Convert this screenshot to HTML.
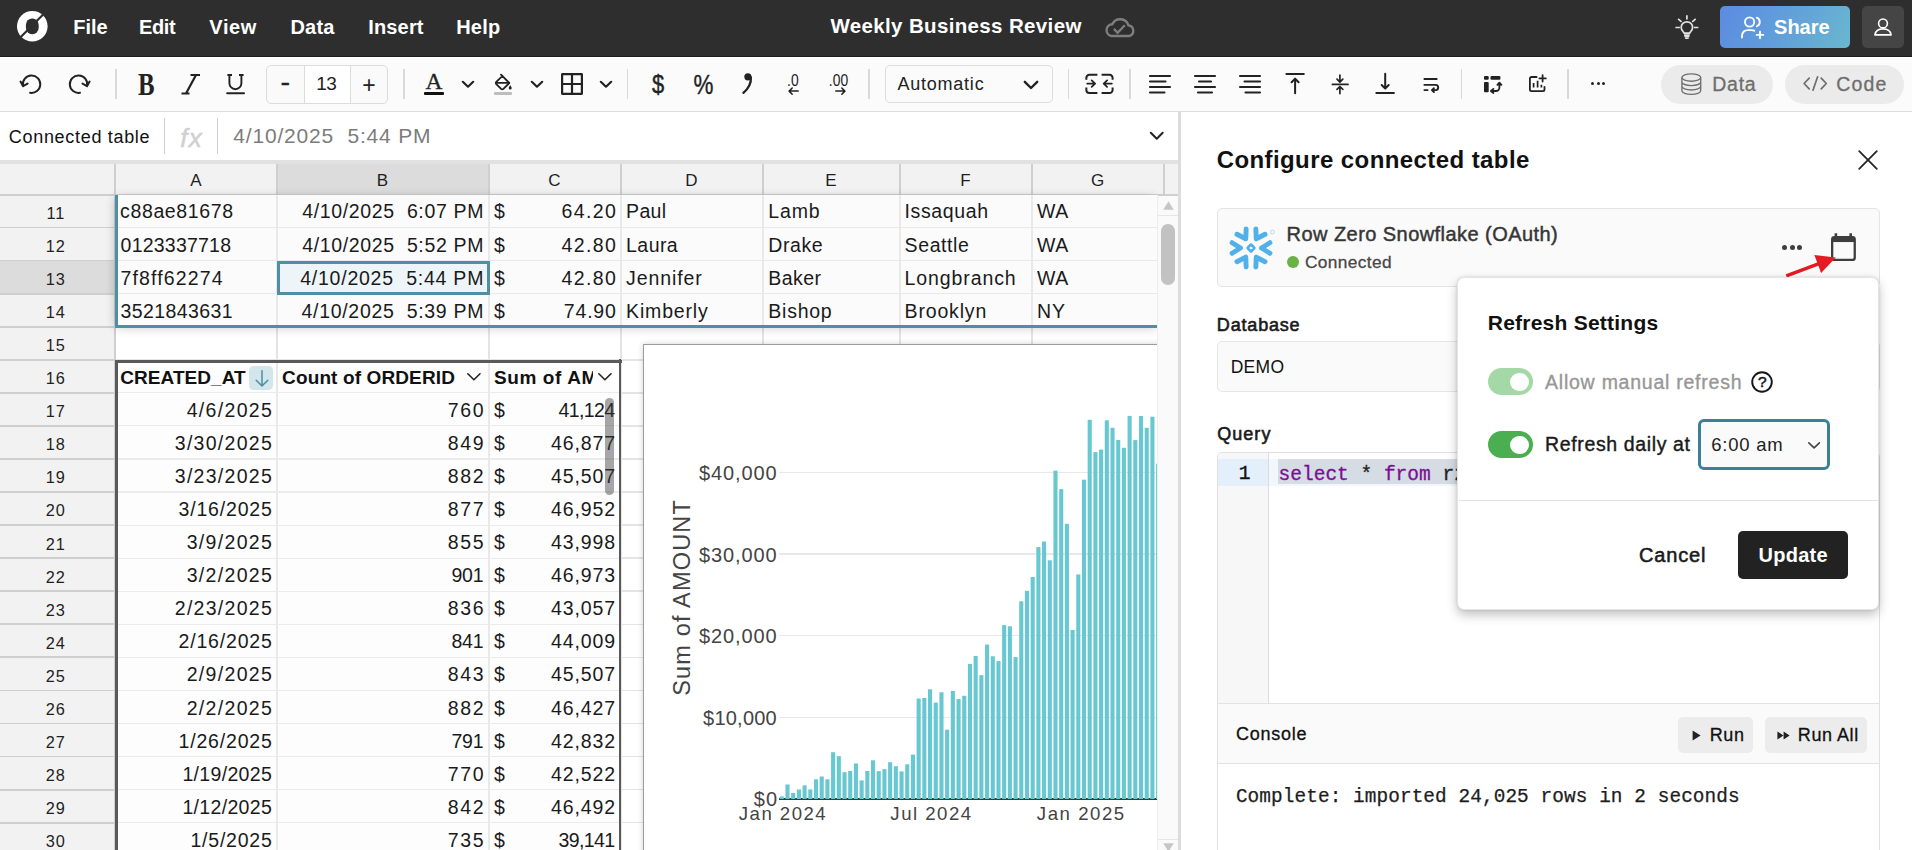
<!DOCTYPE html>
<html lang="en"><head><meta charset="utf-8"><title>Weekly Business Review</title>
<style>
html,body{margin:0;padding:0;}
body{width:1912px;height:850px;overflow:hidden;position:relative;background:#fff;font-family:"Liberation Sans",sans-serif;color:#1a1a1a;}
div,span,svg{position:absolute;box-sizing:border-box;}
span{white-space:pre;}
.m{font-family:"Liberation Mono",monospace;}
svg{overflow:visible;}
.ic{fill:none;stroke:#222;stroke-width:2;stroke-linecap:round;stroke-linejoin:round;}
</style></head><body>
<div style="left:0px;top:0px;width:1912px;height:57px;background:#2e2e2e;border-bottom:1px solid #1d1d1d;"></div>
<svg style="left:16.8px;top:10.7px;width:30.6px;height:30.6px" viewBox="0 0 30.6 30.6"><circle cx="15.3" cy="15.3" r="15.3" fill="#fff"/><rect x="8.9" y="7.4" width="12.8" height="15.8" rx="6.2" ry="6.6" fill="#2e2e2e"/><path d="M27.2 2.6L3.0 26.8" stroke="#2e2e2e" stroke-width="2.1"/></svg>
<span id="t1" style="top:17.00px;font-size:20px;line-height:20px;font-weight:700;color:#fff;left:73.28px;">File</span>
<span id="t2" style="top:17.00px;font-size:20px;line-height:20px;font-weight:700;color:#fff;letter-spacing:-0.380px;left:138.98px;">Edit</span>
<span id="t3" style="top:17.00px;font-size:20px;line-height:20px;font-weight:700;color:#fff;letter-spacing:0.640px;left:209.28px;">View</span>
<span id="t4" style="top:17.00px;font-size:20px;line-height:20px;font-weight:700;color:#fff;letter-spacing:0.194px;left:290.48px;">Data</span>
<span id="t5" style="top:17.00px;font-size:20px;line-height:20px;font-weight:700;color:#fff;letter-spacing:0.174px;left:368.18px;">Insert</span>
<span id="t6" style="top:17.00px;font-size:20px;line-height:20px;font-weight:700;color:#fff;letter-spacing:0.199px;left:456.18px;">Help</span>
<span id="t7" style="top:16.00px;font-size:20.5px;line-height:20.5px;font-weight:700;color:#fff;letter-spacing:0.353px;left:830.46px;">Weekly Business Review</span>
<svg style="left:1104.8px;top:16.6px;width:31px;height:21px" viewBox="0 0 31 21"><path d="M6.4 19A5.9 5.9 0 0 1 7.3 7.3A8.6 8.6 0 0 1 23.4 8.4A5.4 5.4 0 0 1 24.2 19Z" fill="none" stroke="#7e7e7e" stroke-width="2.4" stroke-linejoin="round"/><path d="M8.9 11.9L12.6 15.8L19.8 8.2" fill="none" stroke="#7e7e7e" stroke-width="2.3" stroke-linecap="butt" stroke-linejoin="miter"/></svg>
<svg style="left:1675px;top:14px;width:24px;height:26px" viewBox="0 0 24 26"><g fill="none" stroke="#e2e2e2" stroke-width="1.7" stroke-linecap="butt" stroke-linejoin="round"><path d="M11.9 1.2V5.6M3.1 4.9L6.6 7.8M20.7 4.9L17.2 7.8M0.4 13.5H4.9M18.9 13.5H23.4"/><path d="M9 19.2C8.7 17.4 6.2 16.6 6.2 13.5A5.7 5.7 0 0 1 17.6 13.5C17.6 16.6 15.1 17.4 14.8 19.2Z"/><path d="M9 20.9H14.8M9.4 22.6H14.4M10.1 24.2H13.7" stroke-width="1.5"/></g></svg>
<div style="left:1720px;top:6px;width:130px;height:42px;border-radius:5px;background:linear-gradient(115deg,#5b8be2 0%,#62a2d9 55%,#69b7cf 100%);"></div>
<svg style="left:1741px;top:16px;width:25px;height:24px" viewBox="0 0 25 24"><g fill="none" stroke="#fff" stroke-width="1.9" stroke-linecap="round" stroke-linejoin="round"><circle cx="8.6" cy="6" r="4.6"/><path d="M1 21.5v-1.8a5.6 5.6 0 0 1 5.6-5.6h4.2a5.6 5.6 0 0 1 2.4.55"/><path d="M15.8 1.7a4.6 4.6 0 0 1 0 8.6"/><path d="M19 15.6v6.6M15.7 18.9h6.6"/></g></svg>
<span id="t8" style="top:17.00px;font-size:20px;line-height:20px;font-weight:700;color:#fff;letter-spacing:-0.038px;left:1774.08px;">Share</span>
<div style="left:1862px;top:6px;width:42px;height:42px;border-radius:5px;background:#454545;"></div>
<svg style="left:1874px;top:18px;width:18px;height:18px" viewBox="0 0 18 18"><g fill="none" stroke="#fff" stroke-width="1.6" stroke-linejoin="round"><circle cx="9" cy="5.4" r="4.4"/><path d="M0.9 16.9c0.6-3.6 3.4-6 8.1-6s7.5 2.4 8.1 6z"/></g></svg>
<div style="left:0px;top:57px;width:1912px;height:55px;background:#fbfbfb;border-top:1px solid #fff;border-bottom:1px solid #dddddd;"></div>
<div style="left:115.25px;top:69.3px;width:1.5px;height:29.8px;background:#d9d9d9;"></div>
<div style="left:403.25px;top:69.3px;width:1.5px;height:29.8px;background:#d9d9d9;"></div>
<div style="left:626.95px;top:69.3px;width:1.5px;height:29.8px;background:#d9d9d9;"></div>
<div style="left:868.25px;top:69.3px;width:1.5px;height:29.8px;background:#d9d9d9;"></div>
<div style="left:1067.65px;top:69.3px;width:1.5px;height:29.8px;background:#d9d9d9;"></div>
<div style="left:1129.25px;top:69.3px;width:1.5px;height:29.8px;background:#d9d9d9;"></div>
<div style="left:1460.75px;top:69.3px;width:1.5px;height:29.8px;background:#d9d9d9;"></div>
<div style="left:1567.25px;top:69.3px;width:1.5px;height:29.8px;background:#d9d9d9;"></div>
<svg class="ic" style="left:20px;top:73px;width:22px;height:22px" viewBox="0 0 22 22"><path d="M3.0 12.6A8.7 8.7 0 1 1 10.1 19.8"/><path d="M0.5 8.6L3.1 13.2L7.6 10.6"/></svg>
<svg class="ic" style="left:68px;top:73px;width:22px;height:22px" viewBox="0 0 22 22"><path d="M19.1 12.6A8.7 8.7 0 1 0 12.0 19.8"/><path d="M21.6 8.6L19.0 13.2L14.5 10.6"/></svg>
<span id="t9" style="top:69.00px;font-size:31px;line-height:31px;font-weight:700;color:#222;left:136.16px;font-family:'Liberation Serif',serif;transform:scaleX(0.8);">B</span>
<svg class="ic" style="left:180px;top:74px;width:22px;height:21px" viewBox="0 0 22 21"><path d="M10.5 1h9.5M1.5 19.5h8M16 1L6 19.5" stroke-width="2.2" stroke-linecap="butt"/></svg>
<svg class="ic" style="left:225px;top:74px;width:21px;height:21px" viewBox="0 0 21 21"><path d="M4.4 1v8.2a6 6 0 0 0 12 0V1M2.4 1h4.6M14 1h4.6" stroke-width="1.9" stroke-linecap="butt"/><path d="M2.2 19.2h16.8" stroke-width="2"/></svg>
<div style="left:266px;top:65px;width:122px;height:39px;border:1.5px solid #dcdcdc;border-radius:5px;background:#fafafa;"></div>
<div style="left:304px;top:66px;width:47px;height:37px;background:#fff;border-left:1.5px solid #dcdcdc;border-right:1.5px solid #dcdcdc;"></div>
<span id="t10" style="top:70.00px;font-size:25px;line-height:25px;color:#222;left:281.04px;transform:scaleX(1.15);-webkit-text-stroke:0.3px #222;">-</span>
<span id="t11" style="top:74.00px;font-size:19px;line-height:19px;color:#222;letter-spacing:-0.573px;left:316.32px;">13</span>
<span id="t12" style="top:74.00px;font-size:23px;line-height:23px;color:#222;left:362.28px;">+</span>
<span id="t13" style="top:70.00px;font-size:23.5px;line-height:23.5px;color:#222;left:425.41px;font-family:'Liberation Serif',serif;-webkit-text-stroke:0.3px #222;">A</span>
<div style="left:424px;top:92px;width:20px;height:3px;background:#111;border-radius:1px;"></div>
<svg style="left:462px;top:81px;width:12px;height:6.5px" viewBox="0 0 12 6.5"><path d="M0.8 0.8L6.0 5.7L11.2 0.8" fill="none" stroke="#222" stroke-width="2.2" stroke-linecap="round" stroke-linejoin="round"/></svg>
<svg style="left:531px;top:81px;width:12px;height:6.5px" viewBox="0 0 12 6.5"><path d="M0.8 0.8L6.0 5.7L11.2 0.8" fill="none" stroke="#222" stroke-width="2.2" stroke-linecap="round" stroke-linejoin="round"/></svg>
<svg style="left:600px;top:81px;width:12px;height:6.5px" viewBox="0 0 12 6.5"><path d="M0.8 0.8L6.0 5.7L11.2 0.8" fill="none" stroke="#222" stroke-width="2.2" stroke-linecap="round" stroke-linejoin="round"/></svg>
<svg class="ic" style="left:494px;top:73.9px;width:19px;height:18px" viewBox="0 0 19 18"><path d="M7 0.7L15.3 9L9.4 14.9a1.6 1.6 0 0 1-2.3 0L2.3 10.1a1.6 1.6 0 0 1 0-2.3L8.5 1.8" stroke-width="1.8"/><path d="M2.2 8.9H15" stroke-width="1.7"/><path d="M16.2 11.2c0 0 1.5 1.9 1.5 2.9a1.5 1.5 0 0 1-3 0c0-1 1.5-2.9 1.5-2.9z" fill="#222" stroke="none"/></svg>
<div style="left:494px;top:92px;width:18px;height:2.6px;background:#bdbdbd;border-radius:1px;"></div>
<svg class="ic" style="left:561px;top:72.8px;width:22px;height:22px" viewBox="0 0 22 22"><rect x="1.1" y="1.1" width="19.8" height="19.8" rx="0.3" stroke-width="2.2" stroke-linejoin="miter"/><path d="M11 1v20M1 11h20" stroke-width="2.2"/></svg>
<span id="t14" style="top:72.00px;font-size:25.5px;line-height:25.5px;color:#222;left:650.61px;transform:scaleX(0.86);-webkit-text-stroke:0.45px #222;">$</span>
<span id="t15" style="top:71.00px;font-size:28px;line-height:28px;color:#222;left:690.65px;transform:scaleX(0.8);-webkit-text-stroke:0.4px #222;">%</span>
<svg style="left:742px;top:73.3px;width:11px;height:21px" viewBox="0 0 11 21"><circle cx="5.9" cy="3.8" r="3.6" fill="#222"/><path d="M8.9 4.4C9.3 10.6 6.4 15.6 1.4 19.8" fill="none" stroke="#222" stroke-width="2.3" stroke-linecap="round"/></svg>
<span id="t16" style="top:72.00px;font-size:16.5px;line-height:16.5px;color:#222;left:786.22px;transform:scaleX(0.84);">.0</span>
<svg class="ic" style="left:787.5px;top:87px;width:11px;height:8px" viewBox="0 0 11 8"><path d="M10.2 4.1H1.2M4.2 1L1.1 4.1l3.1 3.1" stroke-width="1.5"/></svg>
<span id="t17" style="top:72.00px;font-size:16.5px;line-height:16.5px;color:#222;left:826.73px;transform:scaleX(0.84);">.00</span>
<svg class="ic" style="left:834.5px;top:87px;width:11px;height:8px" viewBox="0 0 11 8"><path d="M0.8 4.1H9.8M6.8 1l3.1 3.1-3.1 3.1" stroke-width="1.5"/></svg>
<div style="left:885px;top:65px;width:168px;height:38px;border:1.5px solid #dcdcdc;border-radius:5px;background:#fbfbfb;"></div>
<span id="t18" style="top:75.00px;font-size:18px;line-height:18px;color:#222;letter-spacing:0.756px;left:897.55px;">Automatic</span>
<svg style="left:1024px;top:80.5px;width:14px;height:7.8px" viewBox="0 0 14 7.8"><path d="M0.8 0.8L7.0 7.0L13.2 0.8" fill="none" stroke="#222" stroke-width="2.4" stroke-linecap="round" stroke-linejoin="round"/></svg>
<svg class="ic" style="left:1084.5px;top:74px;width:29px;height:20px" viewBox="0 0 29 20"><path d="M1.35 5.7V3.85A3 3 0 0 1 4.35 0.85H12.4M16.6 0.85H24.6A3 3 0 0 1 27.6 3.85V5.7M1.35 13.5V16A3 3 0 0 0 4.35 19H12.4M16.6 19H24.6A3 3 0 0 0 27.6 16V13.5" stroke-width="2" stroke-linecap="butt"/><path d="M2.2 9.6H9.8M6.7 6.4L10.1 9.6L6.7 12.8M26.8 9.6H19M22.1 6.4L18.7 9.6L22.1 12.8" stroke-width="1.8"/></svg>
<svg class="ic" style="left:1149px;top:73.65px;width:22px;height:20px" viewBox="0 0 22 20"><path d="M1 2H21M1 7.5H16.5M1 13H21M1 18.5H15.5" stroke-width="2.1" stroke-linecap="round"/></svg>
<svg class="ic" style="left:1194px;top:73.65px;width:22px;height:20px" viewBox="0 0 22 20"><path d="M1 2H21M5 7.5H17M1 13H21M4 18.5H18" stroke-width="2.1" stroke-linecap="round"/></svg>
<svg class="ic" style="left:1239px;top:73.65px;width:22px;height:20px" viewBox="0 0 22 20"><path d="M1 2H21M5.5 7.5H21M1 13H21M6.5 18.5H21" stroke-width="2.1" stroke-linecap="round"/></svg>
<svg class="ic" style="left:1285px;top:73.3px;width:20px;height:21px" viewBox="0 0 20 21"><path d="M1.4 1h17.4M10.1 20.2V6.2M6.6 9.2L10.1 5.6l3.5 3.6" stroke-width="2"/></svg>
<svg class="ic" style="left:1331px;top:74px;width:18px;height:20px" viewBox="0 0 18 20"><path d="M1.4 10.4h15.6M8.9 1v6.6M6 5.2l2.9 2.9 2.9-2.9M8.9 19.6V13M6 15.4l2.9-2.9 2.9 2.9" stroke-width="1.7"/></svg>
<svg class="ic" style="left:1375px;top:73px;width:20px;height:21px" viewBox="0 0 20 21"><path d="M1.3 19.9h17.6M10.2 0.8V15.4M6.7 12L10.2 15.6l3.5-3.6" stroke-width="2"/></svg>
<svg class="ic" style="left:1421.5px;top:76.5px;width:17px;height:17px" viewBox="0 0 17 17"><path d="M2.4 2H14.7M2.4 7.9H13.6a2.6 2.6 0 0 1 0 5.2H10.6M11.9 11.2L9.9 13.1L11.9 15M2.4 13.1H5.6" stroke-width="1.9"/></svg>
<svg style="left:1483.8px;top:75.9px;width:18px;height:17px" viewBox="0 0 18 17"><g fill="#222"><rect x="0" y="0" width="4.7" height="3.8" rx="1"/><rect x="6.5" y="0" width="9.9" height="3.8" rx="1"/><rect x="0" y="6.1" width="4.7" height="10.1" rx="1"/></g><path d="M8.2 15H12a3.4 3.4 0 0 0 3.4-3.4V7.4M9.4 12.9L6.9 15L9.4 17M13.4 8.9L15.4 6.6L17.4 8.9" fill="none" stroke="#222" stroke-width="1.8" stroke-linecap="round" stroke-linejoin="round"/></svg>
<svg class="ic" style="left:1528.9px;top:75px;width:18px;height:18px" viewBox="0 0 18 18"><path d="M7.6 2H2.5A1.6 1.6 0 0 0 0.9 3.6V14.5A1.6 1.6 0 0 0 2.5 16.1H13.9A1.6 1.6 0 0 0 15.5 14.5V11.8M13.6 0.2V6.6M10.4 3.4H16.8" stroke-width="1.8"/><path d="M4.6 12.6V7.9M8.6 12.6V5.8M12.4 12.6V9.8" stroke-width="1.7" stroke-linecap="butt"/></svg>
<div style="left:1590.85px;top:82.35px;width:3.1px;height:3.1px;background:#222;border-radius:50%;"></div>
<div style="left:1596.6px;top:82.35px;width:3.1px;height:3.1px;background:#222;border-radius:50%;"></div>
<div style="left:1602.35px;top:82.35px;width:3.1px;height:3.1px;background:#222;border-radius:50%;"></div>
<div style="left:1661px;top:65px;width:112px;height:39px;background:#ebebeb;border-radius:20px;"></div>
<svg style="left:1680.6px;top:72.6px;width:21px;height:23px" viewBox="0 0 21 23"><g fill="none" stroke="#6f6f6f" stroke-width="1.35"><ellipse cx="10.3" cy="4.5" rx="9.4" ry="3.7"/><path d="M0.9 4.5v13.2c0 2 4.2 3.7 9.4 3.7s9.4-1.7 9.4-3.7V4.5M0.9 8.9c0 2 4.2 3.7 9.4 3.7s9.4-1.7 9.4-3.7M0.9 13.3c0 2 4.2 3.7 9.4 3.7s9.4-1.7 9.4-3.7"/></g></svg>
<span id="t19" style="top:75.00px;font-size:19.5px;line-height:19.5px;color:#6e6e6e;letter-spacing:0.734px;left:1712.30px;-webkit-text-stroke:0.3px #6e6e6e;">Data</span>
<div style="left:1785px;top:65px;width:118.8px;height:39px;background:#ebebeb;border-radius:20px;"></div>
<svg style="left:1803px;top:76px;width:25px;height:15px" viewBox="0 0 25 15"><path d="M6.2 2.2L1.1 7.5l5.1 5.3M18.2 2.2l5.1 5.3-5.1 5.3M14.6 0.8L10 14.2" fill="none" stroke="#6e6e6e" stroke-width="1.7" stroke-linecap="round" stroke-linejoin="round"/></svg>
<span id="t20" style="top:75.00px;font-size:19.5px;line-height:19.5px;color:#6e6e6e;letter-spacing:1.126px;left:1836.30px;-webkit-text-stroke:0.3px #6e6e6e;">Code</span>
<div style="left:0px;top:112px;width:1179px;height:48px;background:#fff;"></div>
<span id="t21" style="top:128.00px;font-size:18px;line-height:18px;color:#111;letter-spacing:0.685px;left:8.85px;">Connected table</span>
<div style="left:164.4px;top:118px;width:1px;height:36px;background:#cfcfcf;"></div>
<div style="left:217px;top:118px;width:1px;height:36px;background:#cfcfcf;"></div>
<span id="t22" style="top:125.00px;font-size:26px;line-height:26px;color:#d0d0d0;font-style:italic;letter-spacing:1.138px;left:180.36px;-webkit-text-stroke:0.5px #d0d0d0;">fx</span>
<span id="t23" style="top:125.00px;font-size:21px;line-height:21px;color:#7c7c7c;letter-spacing:0.824px;left:233.24px;">4/10/2025 &nbsp;5:44 PM</span>
<svg style="left:1150px;top:132px;width:13.5px;height:7.5px" viewBox="0 0 13.5 7.5"><path d="M0.8 0.8L6.75 6.7L12.7 0.8" fill="none" stroke="#222" stroke-width="2" stroke-linecap="round" stroke-linejoin="round"/></svg>
<div style="left:0px;top:160px;width:1179px;height:3.5px;background:#e1e1e1;"></div>
<div style="left:0px;top:163.5px;width:1157.5px;height:687px;background:#fff;"></div>
<div style="left:276.25px;top:195px;width:1.5px;height:655px;background:#e4e4e4;"></div>
<div style="left:488.25px;top:195px;width:1.5px;height:655px;background:#e4e4e4;"></div>
<div style="left:620.25px;top:195px;width:1.5px;height:655px;background:#e4e4e4;"></div>
<div style="left:762.25px;top:195px;width:1.5px;height:655px;background:#e4e4e4;"></div>
<div style="left:899.25px;top:195px;width:1.5px;height:655px;background:#e4e4e4;"></div>
<div style="left:1031.25px;top:195px;width:1.5px;height:655px;background:#e4e4e4;"></div>
<div style="left:115px;top:193.65px;width:1043px;height:1.5px;background:#e4e4e4;"></div>
<div style="left:115px;top:226.72px;width:1043px;height:1.5px;background:#e4e4e4;"></div>
<div style="left:115px;top:259.79px;width:1043px;height:1.5px;background:#e4e4e4;"></div>
<div style="left:115px;top:292.86px;width:1043px;height:1.5px;background:#e4e4e4;"></div>
<div style="left:115px;top:325.93px;width:1043px;height:1.5px;background:#e4e4e4;"></div>
<div style="left:115px;top:359.0px;width:1043px;height:1.5px;background:#e4e4e4;"></div>
<div style="left:115px;top:392.07000000000005px;width:1043px;height:1.5px;background:#e4e4e4;"></div>
<div style="left:115px;top:425.14px;width:1043px;height:1.5px;background:#e4e4e4;"></div>
<div style="left:115px;top:458.21000000000004px;width:1043px;height:1.5px;background:#e4e4e4;"></div>
<div style="left:115px;top:491.28px;width:1043px;height:1.5px;background:#e4e4e4;"></div>
<div style="left:115px;top:524.35px;width:1043px;height:1.5px;background:#e4e4e4;"></div>
<div style="left:115px;top:557.42px;width:1043px;height:1.5px;background:#e4e4e4;"></div>
<div style="left:115px;top:590.49px;width:1043px;height:1.5px;background:#e4e4e4;"></div>
<div style="left:115px;top:623.5600000000001px;width:1043px;height:1.5px;background:#e4e4e4;"></div>
<div style="left:115px;top:656.63px;width:1043px;height:1.5px;background:#e4e4e4;"></div>
<div style="left:115px;top:689.7px;width:1043px;height:1.5px;background:#e4e4e4;"></div>
<div style="left:115px;top:722.77px;width:1043px;height:1.5px;background:#e4e4e4;"></div>
<div style="left:115px;top:755.84px;width:1043px;height:1.5px;background:#e4e4e4;"></div>
<div style="left:115px;top:788.91px;width:1043px;height:1.5px;background:#e4e4e4;"></div>
<div style="left:115px;top:821.98px;width:1043px;height:1.5px;background:#e4e4e4;"></div>
<div style="left:115px;top:855.05px;width:1043px;height:1.5px;background:#e4e4e4;"></div>
<div style="left:0px;top:163.5px;width:1178px;height:31.5px;background:#f2f2f2;"></div>
<div style="left:277px;top:163.5px;width:212px;height:31.5px;background:#dcdcdc;"></div>
<div style="left:0px;top:194px;width:1178px;height:1.8px;background:#cfcfcf;"></div>
<div style="left:114.25px;top:163.5px;width:1.5px;height:31.5px;background:#cfcfcf;"></div>
<div style="left:276.25px;top:163.5px;width:1.5px;height:31.5px;background:#cfcfcf;"></div>
<div style="left:488.25px;top:163.5px;width:1.5px;height:31.5px;background:#cfcfcf;"></div>
<div style="left:620.25px;top:163.5px;width:1.5px;height:31.5px;background:#cfcfcf;"></div>
<div style="left:762.25px;top:163.5px;width:1.5px;height:31.5px;background:#cfcfcf;"></div>
<div style="left:899.25px;top:163.5px;width:1.5px;height:31.5px;background:#cfcfcf;"></div>
<div style="left:1031.25px;top:163.5px;width:1.5px;height:31.5px;background:#cfcfcf;"></div>
<div style="left:1163.25px;top:163.5px;width:1.5px;height:31.5px;background:#cfcfcf;"></div>
<span id="t24" style="top:172.00px;font-size:17px;line-height:17px;color:#1f1f1f;left:190.33px;">A</span>
<span id="t25" style="top:172.00px;font-size:17px;line-height:17px;color:#1f1f1f;left:376.83px;">B</span>
<span id="t26" style="top:172.00px;font-size:17px;line-height:17px;color:#1f1f1f;left:548.36px;">C</span>
<span id="t27" style="top:172.00px;font-size:17px;line-height:17px;color:#1f1f1f;left:685.36px;">D</span>
<span id="t28" style="top:172.00px;font-size:17px;line-height:17px;color:#1f1f1f;left:825.33px;">E</span>
<span id="t29" style="top:172.00px;font-size:17px;line-height:17px;color:#1f1f1f;left:960.30px;">F</span>
<span id="t30" style="top:172.00px;font-size:17px;line-height:17px;color:#1f1f1f;left:1090.88px;">G</span>
<div style="left:0px;top:195.5px;width:115px;height:655px;background:#f2f2f2;"></div>
<div style="left:0px;top:260.54px;width:115px;height:33.07px;background:#dcdcdc;"></div>
<div style="left:0px;top:193.5px;width:115px;height:1.8px;background:#cfcfcf;"></div>
<div style="left:0px;top:226.57px;width:115px;height:1.8px;background:#cfcfcf;"></div>
<div style="left:0px;top:259.64000000000004px;width:115px;height:1.8px;background:#cfcfcf;"></div>
<div style="left:0px;top:292.71000000000004px;width:115px;height:1.8px;background:#cfcfcf;"></div>
<div style="left:0px;top:325.78000000000003px;width:115px;height:1.8px;background:#cfcfcf;"></div>
<div style="left:0px;top:358.85px;width:115px;height:1.8px;background:#cfcfcf;"></div>
<div style="left:0px;top:391.9200000000001px;width:115px;height:1.8px;background:#cfcfcf;"></div>
<div style="left:0px;top:424.99px;width:115px;height:1.8px;background:#cfcfcf;"></div>
<div style="left:0px;top:458.06000000000006px;width:115px;height:1.8px;background:#cfcfcf;"></div>
<div style="left:0px;top:491.13px;width:115px;height:1.8px;background:#cfcfcf;"></div>
<div style="left:0px;top:524.2px;width:115px;height:1.8px;background:#cfcfcf;"></div>
<div style="left:0px;top:557.27px;width:115px;height:1.8px;background:#cfcfcf;"></div>
<div style="left:0px;top:590.34px;width:115px;height:1.8px;background:#cfcfcf;"></div>
<div style="left:0px;top:623.4100000000001px;width:115px;height:1.8px;background:#cfcfcf;"></div>
<div style="left:0px;top:656.48px;width:115px;height:1.8px;background:#cfcfcf;"></div>
<div style="left:0px;top:689.5500000000001px;width:115px;height:1.8px;background:#cfcfcf;"></div>
<div style="left:0px;top:722.62px;width:115px;height:1.8px;background:#cfcfcf;"></div>
<div style="left:0px;top:755.69px;width:115px;height:1.8px;background:#cfcfcf;"></div>
<div style="left:0px;top:788.76px;width:115px;height:1.8px;background:#cfcfcf;"></div>
<div style="left:0px;top:821.83px;width:115px;height:1.8px;background:#cfcfcf;"></div>
<div style="left:0px;top:854.9px;width:115px;height:1.8px;background:#cfcfcf;"></div>
<div style="left:114.2px;top:195.5px;width:1.6px;height:655px;background:#cfcfcf;"></div>
<span id="t31" style="top:205.00px;font-size:16.3px;line-height:16.3px;color:#1f1f1f;letter-spacing:0.900px;left:46.40px;">11</span>
<span id="t32" style="top:238.00px;font-size:16.3px;line-height:16.3px;color:#1f1f1f;letter-spacing:0.900px;left:45.79px;">12</span>
<span id="t33" style="top:271.00px;font-size:16.3px;line-height:16.3px;color:#1f1f1f;letter-spacing:0.900px;left:45.79px;">13</span>
<span id="t34" style="top:304.00px;font-size:16.3px;line-height:16.3px;color:#1f1f1f;letter-spacing:0.900px;left:45.79px;">14</span>
<span id="t35" style="top:337.00px;font-size:16.3px;line-height:16.3px;color:#1f1f1f;letter-spacing:0.900px;left:45.79px;">15</span>
<span id="t36" style="top:370.00px;font-size:16.3px;line-height:16.3px;color:#1f1f1f;letter-spacing:0.900px;left:45.79px;">16</span>
<span id="t37" style="top:403.00px;font-size:16.3px;line-height:16.3px;color:#1f1f1f;letter-spacing:0.900px;left:45.79px;">17</span>
<span id="t38" style="top:436.00px;font-size:16.3px;line-height:16.3px;color:#1f1f1f;letter-spacing:0.900px;left:45.79px;">18</span>
<span id="t39" style="top:469.00px;font-size:16.3px;line-height:16.3px;color:#1f1f1f;letter-spacing:0.900px;left:45.79px;">19</span>
<span id="t40" style="top:502.00px;font-size:16.3px;line-height:16.3px;color:#1f1f1f;letter-spacing:0.900px;left:45.79px;">20</span>
<span id="t41" style="top:536.00px;font-size:16.3px;line-height:16.3px;color:#1f1f1f;letter-spacing:0.900px;left:45.79px;">21</span>
<span id="t42" style="top:569.00px;font-size:16.3px;line-height:16.3px;color:#1f1f1f;letter-spacing:0.900px;left:45.79px;">22</span>
<span id="t43" style="top:602.00px;font-size:16.3px;line-height:16.3px;color:#1f1f1f;letter-spacing:0.900px;left:45.79px;">23</span>
<span id="t44" style="top:635.00px;font-size:16.3px;line-height:16.3px;color:#1f1f1f;letter-spacing:0.900px;left:45.79px;">24</span>
<span id="t45" style="top:668.00px;font-size:16.3px;line-height:16.3px;color:#1f1f1f;letter-spacing:0.900px;left:45.79px;">25</span>
<span id="t46" style="top:701.00px;font-size:16.3px;line-height:16.3px;color:#1f1f1f;letter-spacing:0.900px;left:45.79px;">26</span>
<span id="t47" style="top:734.00px;font-size:16.3px;line-height:16.3px;color:#1f1f1f;letter-spacing:0.900px;left:45.79px;">27</span>
<span id="t48" style="top:767.00px;font-size:16.3px;line-height:16.3px;color:#1f1f1f;letter-spacing:0.900px;left:45.79px;">28</span>
<span id="t49" style="top:800.00px;font-size:16.3px;line-height:16.3px;color:#1f1f1f;letter-spacing:0.900px;left:45.79px;">29</span>
<span id="t50" style="top:833.00px;font-size:16.3px;line-height:16.3px;color:#1f1f1f;letter-spacing:0.900px;left:45.79px;">30</span>
<div style="left:116px;top:195.3px;width:1041.5px;height:131.2px;background:#fbfbfb;box-shadow:0 3px 10px rgba(0,0,0,0.14), -4px 0 10px -2px rgba(0,0,0,0.10);"></div>
<div style="left:276.4px;top:195.3px;width:1.2px;height:129.7px;background:#e9e9e9;"></div>
<div style="left:488.4px;top:195.3px;width:1.2px;height:129.7px;background:#e9e9e9;"></div>
<div style="left:620.4px;top:195.3px;width:1.2px;height:129.7px;background:#e9e9e9;"></div>
<div style="left:762.4px;top:195.3px;width:1.2px;height:129.7px;background:#e9e9e9;"></div>
<div style="left:899.4px;top:195.3px;width:1.2px;height:129.7px;background:#e9e9e9;"></div>
<div style="left:1031.4px;top:195.3px;width:1.2px;height:129.7px;background:#e9e9e9;"></div>
<div style="left:116px;top:226.87px;width:1041.5px;height:1.2px;background:#e9e9e9;"></div>
<div style="left:116px;top:259.94px;width:1041.5px;height:1.2px;background:#e9e9e9;"></div>
<div style="left:116px;top:293.01px;width:1041.5px;height:1.2px;background:#e9e9e9;"></div>
<div style="left:114.9px;top:195.3px;width:3.1px;height:132.5px;background:#4e8fa3;"></div>
<div style="left:114.8px;top:324.9px;width:1042.7px;height:3px;background:#4e8fa3;"></div>
<div style="left:276.9px;top:260.9px;width:213px;height:34.3px;background:#edf5f8;border:3px solid #4e8fa3;"></div>
<span id="t51" style="top:202.00px;font-size:19.5px;line-height:19.5px;letter-spacing:0.616px;left:120.10px;">c88ae81678</span>
<span id="t52" style="top:202.00px;font-size:19.5px;line-height:19.5px;letter-spacing:0.646px;left:302.20px;">4/10/2025 &nbsp;6:07 PM</span>
<span id="t53" style="top:202.00px;font-size:19.5px;line-height:19.5px;left:494.00px;">$</span>
<span id="t54" style="top:202.00px;font-size:19.5px;line-height:19.5px;letter-spacing:1.373px;left:561.60px;">64.20</span>
<span id="t55" style="top:202.00px;font-size:19.5px;line-height:19.5px;letter-spacing:0.291px;left:626.10px;">Paul</span>
<span id="t56" style="top:202.00px;font-size:19.5px;line-height:19.5px;letter-spacing:0.841px;left:768.30px;">Lamb</span>
<span id="t57" style="top:202.00px;font-size:19.5px;line-height:19.5px;letter-spacing:0.607px;left:904.60px;">Issaquah</span>
<span id="t58" style="top:202.00px;font-size:19.5px;line-height:19.5px;letter-spacing:0.501px;left:1037.10px;">WA</span>
<span id="t59" style="top:236.00px;font-size:19.5px;line-height:19.5px;letter-spacing:0.217px;left:120.60px;">0123337718</span>
<span id="t60" style="top:236.00px;font-size:19.5px;line-height:19.5px;letter-spacing:0.646px;left:302.20px;">4/10/2025 &nbsp;5:52 PM</span>
<span id="t61" style="top:236.00px;font-size:19.5px;line-height:19.5px;left:494.00px;">$</span>
<span id="t62" style="top:236.00px;font-size:19.5px;line-height:19.5px;letter-spacing:1.373px;left:561.60px;">42.80</span>
<span id="t63" style="top:236.00px;font-size:19.5px;line-height:19.5px;letter-spacing:0.432px;left:626.10px;">Laura</span>
<span id="t64" style="top:236.00px;font-size:19.5px;line-height:19.5px;letter-spacing:0.593px;left:768.30px;">Drake</span>
<span id="t65" style="top:236.00px;font-size:19.5px;line-height:19.5px;letter-spacing:0.598px;left:904.60px;">Seattle</span>
<span id="t66" style="top:236.00px;font-size:19.5px;line-height:19.5px;letter-spacing:0.501px;left:1037.10px;">WA</span>
<span id="t67" style="top:269.00px;font-size:19.5px;line-height:19.5px;letter-spacing:1.120px;left:120.60px;">7f8ff62274</span>
<span id="t68" style="top:269.00px;font-size:19.5px;line-height:19.5px;letter-spacing:0.764px;left:300.20px;">4/10/2025 &nbsp;5:44 PM</span>
<span id="t69" style="top:269.00px;font-size:19.5px;line-height:19.5px;left:494.00px;">$</span>
<span id="t70" style="top:269.00px;font-size:19.5px;line-height:19.5px;letter-spacing:1.373px;left:561.60px;">42.80</span>
<span id="t71" style="top:269.00px;font-size:19.5px;line-height:19.5px;letter-spacing:0.890px;left:626.10px;">Jennifer</span>
<span id="t72" style="top:269.00px;font-size:19.5px;line-height:19.5px;letter-spacing:0.438px;left:768.30px;">Baker</span>
<span id="t73" style="top:269.00px;font-size:19.5px;line-height:19.5px;letter-spacing:0.899px;left:904.60px;">Longbranch</span>
<span id="t74" style="top:269.00px;font-size:19.5px;line-height:19.5px;letter-spacing:0.501px;left:1037.10px;">WA</span>
<span id="t75" style="top:302.00px;font-size:19.5px;line-height:19.5px;letter-spacing:0.406px;left:120.60px;">3521843631</span>
<span id="t76" style="top:302.00px;font-size:19.5px;line-height:19.5px;letter-spacing:0.681px;left:301.60px;">4/10/2025 &nbsp;5:39 PM</span>
<span id="t77" style="top:302.00px;font-size:19.5px;line-height:19.5px;left:494.00px;">$</span>
<span id="t78" style="top:302.00px;font-size:19.5px;line-height:19.5px;letter-spacing:0.823px;left:563.80px;">74.90</span>
<span id="t79" style="top:302.00px;font-size:19.5px;line-height:19.5px;letter-spacing:0.835px;left:626.10px;">Kimberly</span>
<span id="t80" style="top:302.00px;font-size:19.5px;line-height:19.5px;letter-spacing:0.756px;left:768.30px;">Bishop</span>
<span id="t81" style="top:302.00px;font-size:19.5px;line-height:19.5px;letter-spacing:0.833px;left:904.60px;">Brooklyn</span>
<span id="t82" style="top:302.00px;font-size:19.5px;line-height:19.5px;letter-spacing:0.810px;left:1037.10px;">NY</span>
<div style="left:116px;top:359.75px;width:504px;height:490px;background:#fdfdfd;"></div>
<div style="left:276.4px;top:359.75px;width:1.2px;height:490px;background:#e9e9e9;"></div>
<div style="left:488.4px;top:359.75px;width:1.2px;height:490px;background:#e9e9e9;"></div>
<div style="left:116px;top:392.22px;width:504px;height:1.2px;background:#ebebeb;"></div>
<div style="left:116px;top:425.28999999999996px;width:504px;height:1.2px;background:#ebebeb;"></div>
<div style="left:116px;top:458.36px;width:504px;height:1.2px;background:#ebebeb;"></div>
<div style="left:116px;top:491.42999999999995px;width:504px;height:1.2px;background:#ebebeb;"></div>
<div style="left:116px;top:524.5px;width:504px;height:1.2px;background:#ebebeb;"></div>
<div style="left:116px;top:557.5699999999999px;width:504px;height:1.2px;background:#ebebeb;"></div>
<div style="left:116px;top:590.64px;width:504px;height:1.2px;background:#ebebeb;"></div>
<div style="left:116px;top:623.71px;width:504px;height:1.2px;background:#ebebeb;"></div>
<div style="left:116px;top:656.78px;width:504px;height:1.2px;background:#ebebeb;"></div>
<div style="left:116px;top:689.85px;width:504px;height:1.2px;background:#ebebeb;"></div>
<div style="left:116px;top:722.92px;width:504px;height:1.2px;background:#ebebeb;"></div>
<div style="left:116px;top:755.99px;width:504px;height:1.2px;background:#ebebeb;"></div>
<div style="left:116px;top:789.06px;width:504px;height:1.2px;background:#ebebeb;"></div>
<div style="left:116px;top:822.13px;width:504px;height:1.2px;background:#ebebeb;"></div>
<div style="left:116px;top:855.1999999999999px;width:504px;height:1.2px;background:#ebebeb;"></div>
<div style="left:114.9px;top:359.6px;width:506.7px;height:3.2px;background:#595959;"></div>
<div style="left:114.9px;top:359.6px;width:3.1px;height:491px;background:#5a5a5a;"></div>
<div style="left:618.6px;top:359.05px;width:2.9px;height:491px;background:#595959;"></div>
<span id="t83" style="top:368.00px;font-size:19px;line-height:19px;font-weight:700;color:#111;letter-spacing:0.050px;left:120.32px;">CREATED_AT</span>
<div style="left:249.4px;top:365.8px;width:24px;height:24px;background:#d3e6eb;border-radius:4.5px;"></div>
<svg style="left:254.5px;top:369.5px;width:14px;height:17px" viewBox="0 0 14 17"><path d="M7 0.8v15M1.2 10.2L7 16l5.8-5.8" fill="none" stroke="#4a8ea2" stroke-width="1.5" stroke-linecap="round" stroke-linejoin="round"/></svg>
<span id="t84" style="top:368.00px;font-size:19px;line-height:19px;font-weight:700;color:#111;letter-spacing:0.119px;left:282.12px;">Count of ORDERID</span>
<svg style="left:466.5px;top:373.2px;width:13.8px;height:7.6px" viewBox="0 0 13.8 7.6"><path d="M0.8 0.8L6.9 6.8L13.0 0.8" fill="none" stroke="#222" stroke-width="1.6" stroke-linecap="round" stroke-linejoin="round"/></svg>
<div style="left:490px;top:362px;width:102.5px;height:31px;overflow:hidden;">
<span id="t85" style="top:6.00px;font-size:19px;line-height:19px;font-weight:700;color:#111;letter-spacing:0.600px;left:4.02px;">Sum of AMOUNT</span>
</div>
<svg style="left:598.3px;top:373.2px;width:13.8px;height:7.6px" viewBox="0 0 13.8 7.6"><path d="M0.8 0.8L6.9 6.8L13.0 0.8" fill="none" stroke="#222" stroke-width="1.6" stroke-linecap="round" stroke-linejoin="round"/></svg>
<span id="t86" style="top:401.00px;font-size:19.5px;line-height:19.5px;letter-spacing:1.314px;left:186.70px;">4/6/2025</span>
<span id="t87" style="top:401.00px;font-size:19.5px;line-height:19.5px;letter-spacing:1.629px;left:447.70px;">760</span>
<span id="t88" style="top:401.00px;font-size:19.5px;line-height:19.5px;left:494.00px;">$</span>
<span id="t89" style="top:401.00px;font-size:19.5px;line-height:19.5px;letter-spacing:-0.650px;left:558.60px;">41,124</span>
<span id="t90" style="top:434.00px;font-size:19.5px;line-height:19.5px;letter-spacing:1.280px;left:174.80px;">3/30/2025</span>
<span id="t91" style="top:434.00px;font-size:19.5px;line-height:19.5px;letter-spacing:1.629px;left:447.70px;">849</span>
<span id="t92" style="top:434.00px;font-size:19.5px;line-height:19.5px;left:494.00px;">$</span>
<span id="t93" style="top:434.00px;font-size:19.5px;line-height:19.5px;letter-spacing:0.870px;left:551.00px;">46,877</span>
<span id="t94" style="top:467.00px;font-size:19.5px;line-height:19.5px;letter-spacing:1.280px;left:174.80px;">3/23/2025</span>
<span id="t95" style="top:467.00px;font-size:19.5px;line-height:19.5px;letter-spacing:1.629px;left:447.70px;">882</span>
<span id="t96" style="top:467.00px;font-size:19.5px;line-height:19.5px;left:494.00px;">$</span>
<span id="t97" style="top:467.00px;font-size:19.5px;line-height:19.5px;letter-spacing:0.870px;left:551.00px;">45,507</span>
<span id="t98" style="top:500.00px;font-size:19.5px;line-height:19.5px;letter-spacing:0.805px;left:178.60px;">3/16/2025</span>
<span id="t99" style="top:500.00px;font-size:19.5px;line-height:19.5px;letter-spacing:1.629px;left:447.70px;">877</span>
<span id="t100" style="top:500.00px;font-size:19.5px;line-height:19.5px;left:494.00px;">$</span>
<span id="t101" style="top:500.00px;font-size:19.5px;line-height:19.5px;letter-spacing:0.870px;left:551.00px;">46,952</span>
<span id="t102" style="top:533.00px;font-size:19.5px;line-height:19.5px;letter-spacing:1.314px;left:186.70px;">3/9/2025</span>
<span id="t103" style="top:533.00px;font-size:19.5px;line-height:19.5px;letter-spacing:1.629px;left:447.70px;">855</span>
<span id="t104" style="top:533.00px;font-size:19.5px;line-height:19.5px;left:494.00px;">$</span>
<span id="t105" style="top:533.00px;font-size:19.5px;line-height:19.5px;letter-spacing:0.870px;left:551.00px;">43,998</span>
<span id="t106" style="top:566.00px;font-size:19.5px;line-height:19.5px;letter-spacing:1.314px;left:186.70px;">3/2/2025</span>
<span id="t107" style="top:566.00px;font-size:19.5px;line-height:19.5px;letter-spacing:-0.271px;left:451.50px;">901</span>
<span id="t108" style="top:566.00px;font-size:19.5px;line-height:19.5px;left:494.00px;">$</span>
<span id="t109" style="top:566.00px;font-size:19.5px;line-height:19.5px;letter-spacing:0.870px;left:551.00px;">46,973</span>
<span id="t110" style="top:599.00px;font-size:19.5px;line-height:19.5px;letter-spacing:1.280px;left:174.80px;">2/23/2025</span>
<span id="t111" style="top:599.00px;font-size:19.5px;line-height:19.5px;letter-spacing:1.629px;left:447.70px;">836</span>
<span id="t112" style="top:599.00px;font-size:19.5px;line-height:19.5px;left:494.00px;">$</span>
<span id="t113" style="top:599.00px;font-size:19.5px;line-height:19.5px;letter-spacing:0.870px;left:551.00px;">43,057</span>
<span id="t114" style="top:632.00px;font-size:19.5px;line-height:19.5px;letter-spacing:0.805px;left:178.60px;">2/16/2025</span>
<span id="t115" style="top:632.00px;font-size:19.5px;line-height:19.5px;letter-spacing:-0.271px;left:451.50px;">841</span>
<span id="t116" style="top:632.00px;font-size:19.5px;line-height:19.5px;left:494.00px;">$</span>
<span id="t117" style="top:632.00px;font-size:19.5px;line-height:19.5px;letter-spacing:0.870px;left:551.00px;">44,009</span>
<span id="t118" style="top:665.00px;font-size:19.5px;line-height:19.5px;letter-spacing:1.314px;left:186.70px;">2/9/2025</span>
<span id="t119" style="top:665.00px;font-size:19.5px;line-height:19.5px;letter-spacing:1.629px;left:447.70px;">843</span>
<span id="t120" style="top:665.00px;font-size:19.5px;line-height:19.5px;left:494.00px;">$</span>
<span id="t121" style="top:665.00px;font-size:19.5px;line-height:19.5px;letter-spacing:0.870px;left:551.00px;">45,507</span>
<span id="t122" style="top:699.00px;font-size:19.5px;line-height:19.5px;letter-spacing:1.314px;left:186.70px;">2/2/2025</span>
<span id="t123" style="top:699.00px;font-size:19.5px;line-height:19.5px;letter-spacing:1.629px;left:447.70px;">882</span>
<span id="t124" style="top:699.00px;font-size:19.5px;line-height:19.5px;left:494.00px;">$</span>
<span id="t125" style="top:699.00px;font-size:19.5px;line-height:19.5px;letter-spacing:0.870px;left:551.00px;">46,427</span>
<span id="t126" style="top:732.00px;font-size:19.5px;line-height:19.5px;letter-spacing:0.805px;left:178.60px;">1/26/2025</span>
<span id="t127" style="top:732.00px;font-size:19.5px;line-height:19.5px;letter-spacing:-0.271px;left:451.50px;">791</span>
<span id="t128" style="top:732.00px;font-size:19.5px;line-height:19.5px;left:494.00px;">$</span>
<span id="t129" style="top:732.00px;font-size:19.5px;line-height:19.5px;letter-spacing:0.870px;left:551.00px;">42,832</span>
<span id="t130" style="top:765.00px;font-size:19.5px;line-height:19.5px;letter-spacing:0.330px;left:182.40px;">1/19/2025</span>
<span id="t131" style="top:765.00px;font-size:19.5px;line-height:19.5px;letter-spacing:1.629px;left:447.70px;">770</span>
<span id="t132" style="top:765.00px;font-size:19.5px;line-height:19.5px;left:494.00px;">$</span>
<span id="t133" style="top:765.00px;font-size:19.5px;line-height:19.5px;letter-spacing:0.870px;left:551.00px;">42,522</span>
<span id="t134" style="top:798.00px;font-size:19.5px;line-height:19.5px;letter-spacing:0.330px;left:182.40px;">1/12/2025</span>
<span id="t135" style="top:798.00px;font-size:19.5px;line-height:19.5px;letter-spacing:1.629px;left:447.70px;">842</span>
<span id="t136" style="top:798.00px;font-size:19.5px;line-height:19.5px;left:494.00px;">$</span>
<span id="t137" style="top:798.00px;font-size:19.5px;line-height:19.5px;letter-spacing:0.870px;left:551.00px;">46,492</span>
<span id="t138" style="top:831.00px;font-size:19.5px;line-height:19.5px;letter-spacing:0.771px;left:190.50px;">1/5/2025</span>
<span id="t139" style="top:831.00px;font-size:19.5px;line-height:19.5px;letter-spacing:1.629px;left:447.70px;">735</span>
<span id="t140" style="top:831.00px;font-size:19.5px;line-height:19.5px;left:494.00px;">$</span>
<span id="t141" style="top:831.00px;font-size:19.5px;line-height:19.5px;letter-spacing:-0.650px;left:558.60px;">39,141</span>
<div style="left:605.2px;top:397.6px;width:8.8px;height:97px;background:rgba(60,60,60,0.45);border-radius:4.4px;"></div>
<div style="left:0;top:0;width:1157.5px;height:850px;overflow:hidden;">
<div style="left:642.5px;top:343.5px;width:560px;height:520px;background:#fff;border:1.3px solid #9c9c9c;box-shadow:0 0 6px rgba(0,0,0,0.18);"></div>
<div style="left:779px;top:716.5500000000001px;width:380px;height:1.2px;background:#e8e8e8;"></div>
<div style="left:779px;top:635.0px;width:380px;height:1.2px;background:#e8e8e8;"></div>
<div style="left:779px;top:553.45px;width:380px;height:1.2px;background:#e8e8e8;"></div>
<div style="left:779px;top:471.90000000000003px;width:380px;height:1.2px;background:#e8e8e8;"></div>
<div style="left:779px;top:798px;width:380px;height:2px;background:#343d3d;"></div>
<svg style="left:0;top:0;width:1200px;height:850px" viewBox="0 0 1200 850"><g fill="#67c8d1"><rect x="779.75" y="796.4" width="4.1" height="2.6"/><rect x="785.45" y="784.5" width="4.1" height="14.5"/><rect x="791.15" y="792.9" width="4.1" height="6.1"/><rect x="796.86" y="789.5" width="4.1" height="9.5"/><rect x="802.56" y="785.4" width="4.1" height="13.6"/><rect x="808.26" y="789.4" width="4.1" height="9.6"/><rect x="813.96" y="779.3" width="4.1" height="19.7"/><rect x="819.66" y="776.5" width="4.1" height="22.5"/><rect x="825.37" y="779.3" width="4.1" height="19.7"/><rect x="831.07" y="752.2" width="4.1" height="46.8"/><rect x="836.77" y="756.2" width="4.1" height="42.8"/><rect x="842.47" y="772.2" width="4.1" height="26.8"/><rect x="848.17" y="771.0" width="4.1" height="28.0"/><rect x="853.88" y="763.5" width="4.1" height="35.5"/><rect x="859.58" y="780.4" width="4.1" height="18.6"/><rect x="865.28" y="771.0" width="4.1" height="28.0"/><rect x="870.98" y="760.3" width="4.1" height="38.7"/><rect x="876.68" y="771.2" width="4.1" height="27.8"/><rect x="882.39" y="769.1" width="4.1" height="29.9"/><rect x="888.09" y="762.2" width="4.1" height="36.8"/><rect x="893.79" y="766.2" width="4.1" height="32.8"/><rect x="899.49" y="771.4" width="4.1" height="27.6"/><rect x="905.19" y="764.3" width="4.1" height="34.7"/><rect x="910.90" y="754.6" width="4.1" height="44.4"/><rect x="916.60" y="698.5" width="4.1" height="100.5"/><rect x="922.30" y="698.0" width="4.1" height="101.0"/><rect x="928.00" y="689.3" width="4.1" height="109.7"/><rect x="933.70" y="702.6" width="4.1" height="96.4"/><rect x="939.41" y="692.3" width="4.1" height="106.7"/><rect x="945.11" y="729.7" width="4.1" height="69.3"/><rect x="950.81" y="690.9" width="4.1" height="108.1"/><rect x="956.51" y="699.1" width="4.1" height="99.9"/><rect x="962.21" y="695.8" width="4.1" height="103.2"/><rect x="967.92" y="663.9" width="4.1" height="135.1"/><rect x="973.62" y="656.0" width="4.1" height="143.0"/><rect x="979.32" y="675.2" width="4.1" height="123.8"/><rect x="985.02" y="644.6" width="4.1" height="154.4"/><rect x="990.72" y="656.3" width="4.1" height="142.7"/><rect x="996.43" y="661.1" width="4.1" height="137.9"/><rect x="1002.13" y="625.1" width="4.1" height="173.9"/><rect x="1007.83" y="626.3" width="4.1" height="172.7"/><rect x="1013.53" y="657.1" width="4.1" height="141.9"/><rect x="1019.23" y="601.3" width="4.1" height="197.7"/><rect x="1024.94" y="590.9" width="4.1" height="208.1"/><rect x="1030.64" y="577.0" width="4.1" height="222.0"/><rect x="1036.34" y="547.1" width="4.1" height="251.9"/><rect x="1042.04" y="541.5" width="4.1" height="257.5"/><rect x="1047.74" y="560.3" width="4.1" height="238.7"/><rect x="1053.45" y="470.6" width="4.1" height="328.4"/><rect x="1059.15" y="489.1" width="4.1" height="309.9"/><rect x="1064.85" y="523.8" width="4.1" height="275.2"/><rect x="1070.55" y="630.0" width="4.1" height="169.0"/><rect x="1076.25" y="574.4" width="4.1" height="224.6"/><rect x="1081.96" y="479.7" width="4.1" height="319.3"/><rect x="1087.66" y="419.8" width="4.1" height="379.2"/><rect x="1093.36" y="452.1" width="4.1" height="346.9"/><rect x="1099.06" y="449.6" width="4.1" height="349.4"/><rect x="1104.76" y="420.3" width="4.1" height="378.7"/><rect x="1110.47" y="427.8" width="4.1" height="371.2"/><rect x="1116.17" y="440.0" width="4.1" height="359.0"/><rect x="1121.87" y="447.8" width="4.1" height="351.2"/><rect x="1127.57" y="415.9" width="4.1" height="383.1"/><rect x="1133.27" y="440.1" width="4.1" height="358.9"/><rect x="1138.98" y="416.0" width="4.1" height="383.0"/><rect x="1144.68" y="427.8" width="4.1" height="371.2"/><rect x="1150.38" y="416.7" width="4.1" height="382.3"/><rect x="1156.08" y="463.7" width="4.1" height="335.3"/></g></svg>
<span id="t142" style="top:789.00px;font-size:20px;line-height:20px;color:#444;letter-spacing:0.990px;left:753.78px;">$0</span>
<span id="t143" style="top:708.00px;font-size:20px;line-height:20px;color:#444;letter-spacing:0.224px;left:703.08px;">$10,000</span>
<span id="t144" style="top:626.00px;font-size:20px;line-height:20px;color:#444;letter-spacing:0.924px;left:698.88px;">$20,000</span>
<span id="t145" style="top:545.00px;font-size:20px;line-height:20px;color:#444;letter-spacing:0.924px;left:698.88px;">$30,000</span>
<span id="t146" style="top:463.00px;font-size:20px;line-height:20px;color:#444;letter-spacing:0.924px;left:698.88px;">$40,000</span>
<span id="t147" style="top:805.00px;font-size:18.6px;line-height:18.6px;color:#444;letter-spacing:1.475px;left:738.83px;">Jan 2024</span>
<span id="t148" style="top:805.00px;font-size:18.6px;line-height:18.6px;color:#444;letter-spacing:1.504px;left:890.33px;">Jul 2024</span>
<span id="t149" style="top:805.00px;font-size:18.6px;line-height:18.6px;color:#444;letter-spacing:1.546px;left:1036.83px;">Jan 2025</span>
<div style="left:682px;top:598px;width:0;height:0;transform:rotate(-90deg);">
<span id="t150" style="top:-10.99px;font-size:23.5px;line-height:23.5px;color:#444;letter-spacing:1.181px;left:-97.85px;/*ROT*/">Sum of AMOUNT</span>
</div>
</div>
<div style="left:1157.5px;top:195.5px;width:20.5px;height:655px;background:#fafafa;"></div>
<div style="left:1157.5px;top:215px;width:20.5px;height:1.2px;background:#e6e6e6;"></div>
<div style="left:1157.5px;top:838.6px;width:20.5px;height:1.2px;background:#e6e6e6;"></div>
<div style="left:1157px;top:195.5px;width:1px;height:655px;background:#ededed;"></div>
<svg style="left:1163px;top:200.5px;width:11px;height:9px" viewBox="0 0 11 9"><path d="M5.5 0.3L10.8 8.8H0.2z" fill="#c6c6c6"/></svg>
<svg style="left:1163px;top:843px;width:11px;height:9px" viewBox="0 0 11 9"><path d="M5.5 8.7L10.8 0.2H0.2z" fill="#c6c6c6"/></svg>
<div style="left:1161.4px;top:224px;width:13.6px;height:60.8px;background:#c2c2c2;border-radius:6.8px;"></div>
<div style="left:1178px;top:112px;width:3px;height:738px;background:#dcdcdc;"></div>
<div style="left:1181px;top:112px;width:731px;height:738px;background:#fff;"></div>
<span id="t151" style="top:148.00px;font-size:24px;line-height:24px;font-weight:700;color:#111;letter-spacing:0.418px;left:1216.64px;">Configure connected table</span>
<svg style="left:1858px;top:150px;width:20px;height:20px" viewBox="0 0 20 20"><path d="M1.2 1.2l17.6 17.6M18.8 1.2L1.2 18.8" stroke="#222" stroke-width="1.7" stroke-linecap="round"/></svg>
<div style="left:1217px;top:208px;width:663px;height:78.6px;background:#fafafa;border:1.3px solid #e4e4e4;border-radius:5px;"></div>
<svg style="left:1229.4px;top:225.5px;width:44px;height:44px" viewBox="-22 -22 44 44"><g fill="none" stroke="#4fb1e8" stroke-width="4.9" stroke-linecap="round" stroke-linejoin="round"><path transform="rotate(0)" d="M-18.9 -5.3L-10.5 0L-18.9 5.3"/><path transform="rotate(60)" d="M-18.9 -5.3L-10.5 0L-18.9 5.3"/><path transform="rotate(120)" d="M-18.9 -5.3L-10.5 0L-18.9 5.3"/><path transform="rotate(180)" d="M-18.9 -5.3L-10.5 0L-18.9 5.3"/><path transform="rotate(240)" d="M-18.9 -5.3L-10.5 0L-18.9 5.3"/><path transform="rotate(300)" d="M-18.9 -5.3L-10.5 0L-18.9 5.3"/></g><rect x="-2.5" y="-2.5" width="5" height="5" rx="0.5" transform="rotate(45)" fill="none" stroke="#4fb1e8" stroke-width="2.7" stroke-linejoin="round"/><circle cx="21.4" cy="-16" r="1.9" fill="none" stroke="#9fd3f2" stroke-width="0.8"/></svg>
<span id="t152" style="top:224.00px;font-size:20px;line-height:20px;color:#363636;letter-spacing:0.441px;left:1286.58px;-webkit-text-stroke:0.45px #363636;">Row Zero Snowflake (OAuth)</span>
<div style="left:1287.1px;top:256.2px;width:11.8px;height:11.8px;background:#67b346;border-radius:50%;"></div>
<span id="t153" style="top:254.00px;font-size:17.3px;line-height:17.3px;color:#484848;letter-spacing:0.381px;left:1304.98px;-webkit-text-stroke:0.3px #484848;">Connected</span>
<div style="left:1782.0px;top:244.8px;width:5px;height:5px;background:#3e3e3e;border-radius:50%;"></div>
<div style="left:1789.5px;top:244.8px;width:5px;height:5px;background:#3e3e3e;border-radius:50%;"></div>
<div style="left:1797.0px;top:244.8px;width:5px;height:5px;background:#3e3e3e;border-radius:50%;"></div>
<svg style="left:1830.7px;top:232.8px;width:25px;height:28.2px" viewBox="0 0 25 28.2"><rect x="1.15" y="4.05" width="22.6" height="22.85" rx="2.2" fill="none" stroke="#3e3e3e" stroke-width="2.3"/><rect x="1.15" y="4.05" width="22.6" height="5" fill="#3e3e3e"/><path d="M4.9 0.2v4M19.7 0.2v4" stroke="#3e3e3e" stroke-width="2.6"/></svg>
<svg style="left:1780px;top:248px;width:64px;height:34px" viewBox="1780 248 64 34"><path d="M1786.3 275.8L1821 262.8" stroke="#e31b23" stroke-width="3.4" stroke-linecap="butt"/><path d="M1835.8 257.5L1814.4 255L1821.1 273.1z" fill="#e31b23"/></svg>
<span id="t154" style="top:316.00px;font-size:18px;line-height:18px;letter-spacing:0.819px;left:1216.85px;-webkit-text-stroke:0.6px #1a1a1a;">Database</span>
<div style="left:1217px;top:341px;width:663px;height:50.5px;background:#fafafa;border:1.3px solid #e6e6e6;border-radius:5px;"></div>
<span id="t155" style="top:359.00px;font-size:17.5px;line-height:17.5px;color:#111;letter-spacing:0.287px;left:1230.67px;">DEMO</span>
<span id="t156" style="top:425.00px;font-size:18px;line-height:18px;letter-spacing:1.066px;left:1217.15px;-webkit-text-stroke:0.6px #1a1a1a;">Query</span>
<div style="left:1217px;top:452px;width:663px;height:401px;background:#fff;border:1.3px solid #e0e0e0;border-radius:5px 5px 0 0;"></div>
<div style="left:1218.3px;top:453.3px;width:50.2px;height:249.7px;background:#f7f7f7;border-radius:4px 0 0 0;"></div>
<div style="left:1268.2px;top:453.3px;width:1.2px;height:249.7px;background:#dcdcdc;"></div>
<div style="left:1218.3px;top:459.2px;width:50px;height:26.5px;background:#e3f0fb;"></div>
<div style="left:1269.4px;top:459.2px;width:609.3px;height:26.5px;background:#f1f7fd;"></div>
<div style="left:1278px;top:459.2px;width:190px;height:24.8px;background:#d5dce3;"></div>
<span id="t157" class="m" style="top:465.00px;font-size:19.5px;line-height:19.5px;color:#111;left:1238.70px;-webkit-text-stroke:0.4px #111;">1</span>
<span class="m" id="code1" style="left:1278.6px;top:464.2px;font-size:19.5px;line-height:22px;color:#222;-webkit-text-stroke:0.3px;"><span style="position:static;color:#7a0f93">select</span> * <span style="position:static;color:#7a0f93">from</span> rz</span>
<div style="left:1218px;top:703px;width:661px;height:60.5px;background:#fafafa;border-top:1.3px solid #e2e2e2;border-bottom:1.3px solid #e2e2e2;"></div>
<span id="t158" style="top:725.00px;font-size:18px;line-height:18px;color:#111;letter-spacing:0.775px;left:1235.95px;-webkit-text-stroke:0.3px #111;">Console</span>
<div style="left:1678px;top:717px;width:75px;height:35.6px;background:#ececec;border-radius:5px;"></div>
<svg style="left:1691.5px;top:729.8px;width:9px;height:11px" viewBox="0 0 9 11"><path d="M0.6 0.6L8.6 5.5L0.6 10.4z" fill="#222"/></svg>
<span id="t159" style="top:726.00px;font-size:18px;line-height:18px;color:#111;letter-spacing:0.732px;left:1709.65px;-webkit-text-stroke:0.3px #111;">Run</span>
<div style="left:1765px;top:717px;width:102px;height:35.6px;background:#ececec;border-radius:5px;"></div>
<svg style="left:1776.5px;top:730.8px;width:13px;height:9px" viewBox="0 0 13 9"><path d="M0.4 0.4L6.4 4.5L0.4 8.6zM6.6 0.4L12.6 4.5L6.6 8.6z" fill="#222"/></svg>
<span id="t160" style="top:726.00px;font-size:18px;line-height:18px;color:#111;letter-spacing:0.542px;left:1797.85px;-webkit-text-stroke:0.3px #111;">Run All</span>
<span id="t161" class="m" style="top:788.00px;font-size:19.4px;line-height:19.4px;color:#1d1d1d;letter-spacing:0.081px;left:1235.90px;-webkit-text-stroke:0.25px #1d1d1d;">Complete: imported 24,025 rows in 2 seconds</span>
<div style="left:1456.9px;top:277px;width:421.9px;height:332.8px;background:#fff;border-radius:7px;border:1px solid #e4e4e4;box-shadow:0 5px 11px rgba(0,0,0,0.24),0 0 3px rgba(0,0,0,0.12);"></div>
<span id="t162" style="top:312.00px;font-size:21px;line-height:21px;font-weight:700;color:#111;letter-spacing:0.236px;left:1487.74px;">Refresh Settings</span>
<div style="left:1488px;top:368px;width:45px;height:27px;background:#a4d8a6;border-radius:13.5px;"></div>
<div style="left:1510.4px;top:372.6px;width:18.6px;height:18.6px;background:#fff;border-radius:50%;"></div>
<span id="t163" style="top:373.00px;font-size:19.5px;line-height:19.5px;color:#979797;letter-spacing:0.753px;left:1545.10px;-webkit-text-stroke:0.35px #979797;">Allow manual refresh</span>
<svg style="left:1751.2px;top:370.7px;width:22px;height:22px" viewBox="0 0 22 22"><circle cx="11" cy="11" r="9.8" fill="none" stroke="#151515" stroke-width="1.9"/></svg>
<span id="t164" style="top:374.00px;font-size:15.5px;line-height:15.5px;color:#151515;left:1758.09px;-webkit-text-stroke:0.5px #151515;">?</span>
<div style="left:1488px;top:431px;width:45px;height:27px;background:#4bae50;border-radius:13.5px;"></div>
<div style="left:1510.4px;top:435.6px;width:18.6px;height:18.6px;background:#fff;border-radius:50%;"></div>
<span id="t165" style="top:435.00px;font-size:19.5px;line-height:19.5px;letter-spacing:0.628px;left:1545.10px;-webkit-text-stroke:0.4px #1a1a1a;">Refresh daily at</span>
<div style="left:1698px;top:419px;width:132px;height:51px;background:#fafafa;border:3px solid #3a8198;border-radius:6px;"></div>
<span id="t166" style="top:436.00px;font-size:18.5px;line-height:18.5px;color:#222;letter-spacing:0.745px;left:1711.33px;">6:00 am</span>
<svg style="left:1808.4px;top:441.6px;width:12.2px;height:6.6px" viewBox="0 0 12.2 6.6"><path d="M0.8 0.8L6.1 5.8L11.399999999999999 0.8" fill="none" stroke="#444" stroke-width="1.6" stroke-linecap="round" stroke-linejoin="round"/></svg>
<div style="left:1458.5px;top:499.6px;width:419.3px;height:1.3px;background:#e3e3e3;"></div>
<span id="t167" style="top:545.00px;font-size:20px;line-height:20px;letter-spacing:0.835px;left:1639.08px;-webkit-text-stroke:0.55px #1a1a1a;">Cancel</span>
<div style="left:1738px;top:531.2px;width:110px;height:47.8px;background:#222;border-radius:5px;"></div>
<span id="t168" style="top:545.00px;font-size:20px;line-height:20px;font-weight:700;color:#fff;letter-spacing:0.229px;left:1758.58px;">Update</span>
</body></html>
